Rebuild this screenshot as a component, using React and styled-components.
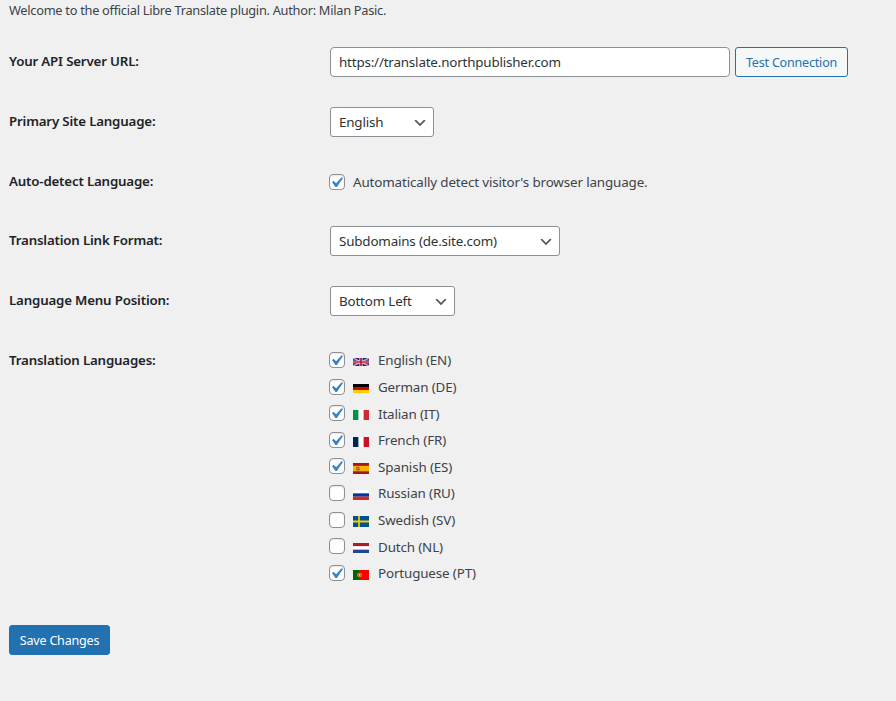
import React, { useState } from "react";
import styled, { createGlobalStyle } from "styled-components";

const LANGUAGES = [
  { code: "EN", name: "English", enabled: true, flagHeight: 8 },
  { code: "DE", name: "German", enabled: true, flagHeight: 9 },
  { code: "IT", name: "Italian", enabled: true, flagHeight: 10 },
  { code: "FR", name: "French", enabled: true, flagHeight: 10 },
  { code: "ES", name: "Spanish", enabled: true, flagHeight: 11 },
  { code: "RU", name: "Russian", enabled: false, flagHeight: 10 },
  { code: "SV", name: "Swedish", enabled: false, flagHeight: 11 },
  { code: "NL", name: "Dutch", enabled: false, flagHeight: 10 },
  { code: "PT", name: "Portuguese", enabled: true, flagHeight: 10 },
];

const FLAGS = {
  EN: (
    <>
      <rect width="16" height="9" fill="#1c2d74" />
      <path d="M0 0l16 9M16 0L0 9" stroke="#e6dce8" strokeWidth="1.3" />
      <path d="M0 0l16 9M16 0L0 9" stroke="#d0304e" strokeWidth="0.5" />
      <path d="M8 0v9M0 4.5h16" stroke="#f4eef2" strokeWidth="3" />
      <path d="M8 0v9M0 4.5h16" stroke="#c8183a" strokeWidth="1.8" />
    </>
  ),
  DE: (
    <>
      <rect width="16" height="3" fill="#000" />
      <rect y="3" width="16" height="3" fill="#d00" />
      <rect y="6" width="16" height="3" fill="#ffce00" />
    </>
  ),
  IT: (
    <>
      <rect width="16" height="9" fill="#fff" />
      <rect width="5.4" height="9" fill="#009246" />
      <rect x="10.6" width="5.4" height="9" fill="#ce2b37" />
    </>
  ),
  FR: (
    <>
      <rect width="16" height="9" fill="#fff" />
      <rect width="5.4" height="9" fill="#002654" />
      <rect x="10.6" width="5.4" height="9" fill="#ce1126" />
    </>
  ),
  ES: (
    <>
      <rect width="16" height="9" fill="#aa151b" />
      <rect y="2.3" width="16" height="4.5" fill="#f1b400" />
      <rect x="3.2" y="3" width="3.4" height="3.2" rx="0.8" fill="#b5582a" />
      <rect x="4.4" y="3.9" width="1.2" height="1.2" fill="#c98a7a" />
    </>
  ),
  RU: (
    <>
      <rect width="16" height="3" fill="#fff" />
      <rect y="3" width="16" height="3" fill="#0039a6" />
      <rect y="6" width="16" height="3" fill="#d52b1e" />
    </>
  ),
  SV: (
    <>
      <rect width="16" height="9" fill="#005293" />
      <path d="M6 0v9M0 4.5h16" stroke="#fecb00" strokeWidth="1.7" />
    </>
  ),
  NL: (
    <>
      <rect width="16" height="3" fill="#ae1c28" />
      <rect y="3" width="16" height="3" fill="#fff" />
      <rect y="6" width="16" height="3" fill="#21468b" />
    </>
  ),
  PT: (
    <>
      <rect width="16" height="9" fill="#f00" />
      <rect width="6.4" height="9" fill="#060" />
      <ellipse cx="6.5" cy="4.5" rx="2.4" ry="2.1" fill="#d8b010" />
      <ellipse cx="6.5" cy="4.5" rx="1.7" ry="1.5" fill="#e03818" />
      <ellipse cx="6.5" cy="4.5" rx="0.8" ry="0.7" fill="#f6e8e8" />
    </>
  ),
};

const Check = ({ checked, onChange }) => (
  <Box>
    <HiddenInput type="checkbox" checked={checked} onChange={onChange} />
    {checked && (
      <Tick viewBox="0 0 20 20">
        <path d="M14.83 4.89l1.34.94-5.81 8.38H9.02L5.78 9.67l1.34-1.25 2.57 2.4z" />
      </Tick>
    )}
  </Box>
);

const App = () => {
  const [url, setUrl] = useState("https://translate.northpublisher.com");
  const [autoDetect, setAutoDetect] = useState(true);
  const [languages, setLanguages] = useState(LANGUAGES);

  const toggle = (code) => {
    setLanguages(
      languages.map((lang) =>
        lang.code === code ? { ...lang, enabled: !lang.enabled } : lang
      )
    );
  };

  return (
    <Page>
      <GlobalStyle />
      <Intro>
        Welcome to the official Libre Translate plugin. Author: Milan Pasic.
      </Intro>
      <Form onSubmit={(ev) => ev.preventDefault()}>
        <Row>
          <Label>Your API Server URL:</Label>
          <Field>
            <UrlInput
              type="text"
              value={url}
              onChange={(ev) => setUrl(ev.target.value)}
            />
            <Button type="button">Test Connection</Button>
          </Field>
        </Row>
        <Row>
          <Label>Primary Site Language:</Label>
          <Field>
            <Select $width={104}>
              <option>English</option>
            </Select>
          </Field>
        </Row>
        <Row $height={59}>
          <Label>Auto-detect Language:</Label>
          <CheckLabel>
            <Check
              checked={autoDetect}
              onChange={() => setAutoDetect(!autoDetect)}
            />
            <Caption>Automatically detect visitor's browser language.</Caption>
          </CheckLabel>
        </Row>
        <Row>
          <Label>Translation Link Format:</Label>
          <Field>
            <Select $width={230}>
              <option>Subdomains (de.site.com)</option>
            </Select>
          </Field>
        </Row>
        <Row>
          <Label>Language Menu Position:</Label>
          <Field>
            <Select $width={125}>
              <option>Bottom Left</option>
            </Select>
          </Field>
        </Row>
        <Row $height={294}>
          <Label>Translation Languages:</Label>
          <LanguageList>
            {languages.map((lang) => (
              <LanguageItem key={lang.code}>
                <Check
                  checked={lang.enabled}
                  onChange={() => toggle(lang.code)}
                />
                <Flag
                  viewBox="0 0 16 9"
                  preserveAspectRatio="none"
                  $height={lang.flagHeight}
                >
                  {FLAGS[lang.code]}
                </Flag>
                <LanguageName>
                  {lang.name} ({lang.code})
                </LanguageName>
              </LanguageItem>
            ))}
          </LanguageList>
        </Row>
        <Button type="submit" $primary>
          Save Changes
        </Button>
      </Form>
    </Page>
  );
};

const GlobalStyle = createGlobalStyle`
  * {
    box-sizing: border-box;
  }
  body {
    margin: 0;
    background-color: #f0f0f0;
    color: #3c434a;
    font-family: "Noto Sans", "Open Sans", sans-serif;
    font-size: 13.4px;
    letter-spacing: -0.14px;
  }
`;

const Page = styled.div`
  height: 701px;
  padding-left: 9px;
  overflow: hidden;
`;

const Intro = styled.p`
  margin: 0;
  height: 32px;
  line-height: 20px;
  font-size: 12.8px;
  letter-spacing: -0.28px;
`;

const Form = styled.form`
  margin: 0;
`;

const Row = styled.div`
  display: grid;
  grid-template-columns: 321px 1fr;
  align-items: start;
  height: ${({ $height }) => $height || 60}px;
  padding-top: 15px;
`;

const Label = styled.div`
  padding-top: 4px;
  line-height: 20px;
  font-size: 13.3px;
  font-weight: 600;
  color: #1d2327;
  letter-spacing: -0.18px;
`;

const Field = styled.div`
  display: flex;
  gap: 5px;
`;

const UrlInput = styled.input`
  width: 400px;
  height: 30px;
  padding: 0 8px;
  border: 1px solid #8c8f94;
  border-radius: 4px;
  background-color: #fff;
  color: #2c3338;
  font-family: inherit;
  font-size: 13.4px;
  letter-spacing: -0.18px;
`;

const Select = styled.select`
  appearance: none;
  width: ${({ $width }) => $width}px;
  height: 30px;
  padding: 0 24px 0 8px;
  border: 1px solid #8c8f94;
  border-radius: 3px;
  background: #fff
    url("data:image/svg+xml;utf8,%3Csvg xmlns='http://www.w3.org/2000/svg' viewBox='0 0 20 20'%3E%3Cpath d='M5 6l5 5 5-5 2 1-7 7-7-7 2-1z' fill='%23555'/%3E%3C/svg%3E")
    no-repeat right 5px top 55%;
  background-size: 16px 16px;
  color: #2c3338;
  font-family: inherit;
  font-size: 13.4px;
  letter-spacing: -0.18px;
`;

const Button = styled.button`
  height: 30px;
  width: ${({ $primary }) => ($primary ? 101 : 113)}px;
  padding: 0;
  border: 1px solid #2271b1;
  border-radius: 3px;
  background-color: ${({ $primary }) => ($primary ? "#2271b1" : "#f6f7f7")};
  color: ${({ $primary }) => ($primary ? "#fff" : "#2271b1")};
  font-family: inherit;
  font-size: 12.5px;
  letter-spacing: -0.18px;
  white-space: nowrap;
  cursor: pointer;
`;

const CheckLabel = styled.label`
  display: flex;
  align-items: center;
  height: 16px;
  margin: 7px 0 0 -1px;
`;

const Caption = styled.span`
  margin-left: 8px;
  line-height: 20px;
`;

const Box = styled.span`
  position: relative;
  flex: none;
  width: 16px;
  height: 16px;
  border: 1px solid #8c8f94;
  border-radius: 4px;
  background-color: #fff;
  box-shadow: inset 0 1px 2px rgba(0, 0, 0, 0.1);
`;

const HiddenInput = styled.input`
  position: absolute;
  inset: 0;
  margin: 0;
  opacity: 0;
`;

const Tick = styled.svg`
  position: absolute;
  top: -3px;
  left: -4px;
  width: 21px;
  height: 21px;
  fill: #3582c4;
  pointer-events: none;
`;

const LanguageList = styled.div`
  display: flex;
  flex-direction: column;
  margin: 0.75px 0 0 -1px;
`;

const LanguageItem = styled.label`
  display: flex;
  align-items: center;
  height: 26.58px;
  line-height: 20px;
`;

const LanguageName = styled.span`
  padding-top: 0.84px;
`;

/* shallow flags sit one pixel higher on the line */
const Flag = styled.svg`
  align-self: flex-end;
  width: 16px;
  height: ${({ $height }) => $height}px;
  margin: 0 9px ${({ $height }) => ($height < 10 ? 7.05 : 6.05)}px 8px;
`;

export default App;
